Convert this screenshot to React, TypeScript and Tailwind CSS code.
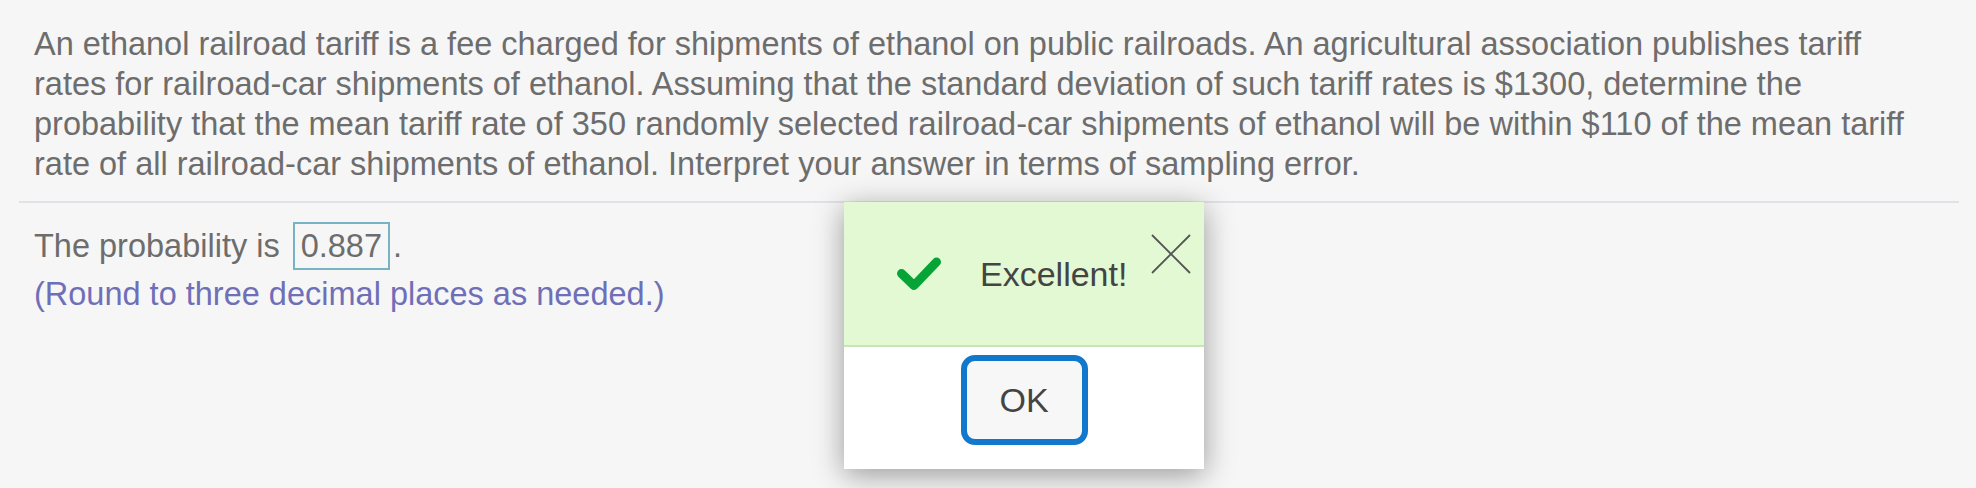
import React from "react";

export default function App() {
  return (
    <div
      className="relative w-[1976px] h-[488px] overflow-hidden bg-[#f6f6f6]"
      style={{ fontFamily: '"Liberation Sans", Arial, Helvetica, sans-serif' }}
    >
      <div className="pl-[19px] pr-[17px] pt-[24px]">
        <p className="px-[15px] text-[32.5px] leading-[40px] text-[#6d6d6d]">
          An ethanol railroad tariff is a fee charged for shipments of ethanol on public railroads. An agricultural association publishes tariff
          <br />
          rates for railroad-car shipments of ethanol. Assuming that the standard deviation of such tariff rates is $1300, determine the
          <br />
          probability that the mean tariff rate of 350 randomly selected railroad-car shipments of ethanol will be within $110 of the mean tariff
          <br />
          rate of all railroad-car shipments of ethanol. Interpret your answer in terms of sampling error.
        </p>
        <div className="mt-[17px] h-[2px] bg-[#dfe2e6]" />
        <div className="px-[15px] pt-[19px] text-[32.5px] leading-[40px]">
          <div className="text-[#6d6d6d]">
            The probability is
            <span className="ml-[13px] inline-block border-2 border-[#76b4c4] px-[6px] py-[2px] leading-[40px]">
              0.887
            </span>
            <span className="ml-[3px]">.</span>
          </div>
          <div className="mt-[4px] text-[#6f6fb8]">(Round to three decimal places as needed.)</div>
        </div>
      </div>

      <div className="absolute left-[844px] top-[202px] w-[360px] h-[267px] flex flex-col bg-white shadow-[0_6px_28px_rgba(0,0,0,0.38)]">
        <div className="relative h-[145px] flex items-center pl-[51px] bg-[#e2f9d3] border-b-2 border-[#c7e6b6]">
          <svg width="48" height="38" viewBox="0 0 48 38" className="shrink-0 mt-[2px]">
            <polyline
              points="6.5,17.5 19,29.5 41.5,6"
              fill="none"
              stroke="#06a437"
              strokeWidth="9"
              strokeLinecap="round"
              strokeLinejoin="round"
            />
          </svg>
          <span className="ml-[37px] text-[34px] leading-[40px] text-[#444444]">Excellent!</span>
          <svg
            width="40"
            height="40"
            viewBox="0 0 40 40"
            className="absolute right-[13px] top-[32px]"
          >
            <line x1="1" y1="1" x2="39" y2="39" stroke="#555555" strokeWidth="1.8" />
            <line x1="39" y1="1" x2="1" y2="39" stroke="#555555" strokeWidth="1.8" />
          </svg>
        </div>
        <div className="flex justify-center pt-[8px]">
          <button className="w-[127px] h-[90px] rounded-[14px] border-[6px] border-[#1178cc] bg-[#f7f7f7] text-[34px] leading-none text-[#444444] flex items-center justify-center">
            OK
          </button>
        </div>
      </div>
    </div>
  );
}
